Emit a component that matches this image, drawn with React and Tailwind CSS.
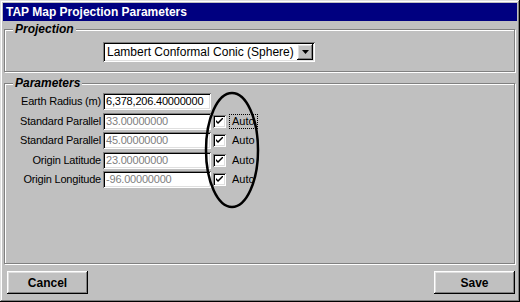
const raised =
  "shadow-[inset_-1px_-1px_#000,inset_1px_1px_#fff,inset_-2px_-2px_#808080,inset_2px_2px_#dfdfdf]";
const sunken =
  "shadow-[inset_1px_1px_#808080,inset_-1px_-1px_#fff,inset_2px_2px_#000,inset_-2px_-2px_#dfdfdf]";

const ROWS = [
  { label: "Earth Radius (m)", value: "6,378,206.40000000", enabled: true },
  { label: "Standard Parallel", value: "33.00000000", auto: true, focus: true },
  { label: "Standard Parallel", value: "45.00000000", auto: true },
  { label: "Origin Latitude", value: "23.00000000", auto: true },
  { label: "Origin Longitude", value: "-96.00000000", auto: true },
];

function Group({ title, className, children }) {
  return (
    <div
      className={`flex flex-col border border-[#808080] shadow-[inset_1px_1px_#fff,1px_1px_#fff] ${className}`}
    >
      <div className="-mt-[8px] ml-[8px] self-start bg-[#c0c0c0] px-[2px] h-[14px] leading-[14px] text-[12px] font-bold italic">
        {title}
      </div>
      {children}
    </div>
  );
}

function Check() {
  return (
    <div className={`w-[13px] h-[13px] bg-white ${sunken} flex items-center justify-center`}>
      <svg width="7" height="7" viewBox="0 0 7 7">
        <path d="M0 2 L0 4 L2 6 L7 1 L7 -1 L2 4 Z" fill="#000" />
      </svg>
    </div>
  );
}

export default function App() {
  return (
    <div className="relative w-[520px] h-[302px] bg-[#c0c0c0] p-[3px] flex flex-col text-black font-['Liberation_Sans',Arial,sans-serif] shadow-[inset_-1px_-1px_#000,inset_1px_1px_#dfdfdf,inset_-2px_-2px_#808080,inset_2px_2px_#fff]">
      <div className="h-[18px] shrink-0 bg-[#000080] text-white text-[12px] font-bold flex items-center pl-[3px]">
        TAP Map Projection Parameters
      </div>

      <div className="flex-1 flex flex-col pl-[1px] pr-[2px]">
        <Group title="Projection" className="mt-[8px] pb-[9px]">
          <div className={`mt-[6px] ml-[98px] w-[212px] h-[20px] bg-white ${sunken} flex items-center pl-[4px] pr-[2px]`}>
            <span className="flex-1 text-[12px] leading-none">Lambert Conformal Conic (Sphere)</span>
            <div className={`w-[16px] h-[16px] bg-[#c0c0c0] ${raised} flex items-center justify-center`}>
              <svg width="7" height="4" viewBox="0 0 7 4">
                <path d="M0 0 H7 L3.5 4 Z" fill="#000" />
              </svg>
            </div>
          </div>
        </Group>

        <Group title="Parameters" className="mt-[11px] flex-1">
          <div className="mt-[3px] flex flex-col gap-[2.5px]">
            {ROWS.map((r, i) => (
              <div key={i} className="flex items-center h-[17px]">
                <div className="w-[97px] pr-[1px] text-right text-[11px] tracking-[-0.2px] whitespace-nowrap">
                  {r.label}
                </div>
                <div
                  className={`ml-[1px] w-[108px] h-[17px] bg-white ${sunken} flex items-center pl-[3px] text-[11px] tracking-[-0.2px] ${
                    r.enabled ? "text-black" : "text-[#808080]"
                  }`}
                >
                  {r.value}
                </div>
                {r.auto && (
                  <div className="flex items-center ml-[2px]">
                    <Check />
                    <span
                      className={`ml-[3px] px-[2px] text-[11px] leading-[13px] border border-dotted ${
                        r.focus ? "border-black" : "border-transparent"
                      }`}
                    >
                      Auto
                    </span>
                  </div>
                )}
              </div>
            ))}
          </div>
        </Group>

        <div className="mt-[7px] mb-[5px] h-[23px] flex justify-between">
          <button className={`ml-[3px] w-[81px] h-[23px] bg-[#c0c0c0] ${raised} text-[12px] font-bold`}>
            Cancel
          </button>
          <button className={`w-[81px] h-[23px] bg-[#c0c0c0] ${raised} text-[12px] font-bold`}>
            Save
          </button>
        </div>
      </div>

      <svg className="absolute left-0 top-0 pointer-events-none" width="520" height="302">
        <ellipse cx="232" cy="150" rx="26" ry="57" fill="none" stroke="#000" strokeWidth="2.5" />
      </svg>
    </div>
  );
}
